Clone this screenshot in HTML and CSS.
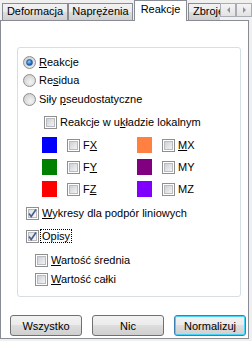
FILE: index.html
```html
<!DOCTYPE html>
<html lang="pl">
<head>
  <meta charset="UTF-8" />
  <title>Reakcje</title>
  <link rel="stylesheet" href="styles.css">
</head>
<body>
  <div class="tabs">
    <div class="tab t1">Deformacja</div>
    <div class="tab t2">Naprężenia</div>
    <div class="tab active">Reakcje</div>
    <div class="tab clip">Zbroje</div>
    <div class="spin">
      <span class="sbtn"><i class="tri left"></i></span>
      <span class="sbtn"><i class="tri right"></i></span>
    </div>
  </div>

  <div class="page">
    <div class="group">
      <div class="row r-first"><span class="radio on"></span><span><u>R</u>eakcje</span></div>
      <div class="row r-radio"><span class="radio"></span><span>Re<u>s</u>idua</span></div>
      <div class="row r-radio2"><span class="radio"></span><span>Siły <u>p</u>seudostatyczne</span></div>
      <div class="row r-local"><span class="check"></span><span>Reakcje w u<u>k</u>ładzie lokalnym</span></div>

      <div class="colors">
        <div class="crow c1">
          <div class="cell"><span class="swatch" style="background:#0000ff"></span><span class="check"></span><span>F<u>X</u></span></div>
          <div class="cell"><span class="swatch" style="background:#ff8040"></span><span class="check"></span><span><u>M</u>X</span></div>
        </div>
        <div class="crow">
          <div class="cell"><span class="swatch" style="background:#008000"></span><span class="check"></span><span>F<u>Y</u></span></div>
          <div class="cell"><span class="swatch" style="background:#800080"></span><span class="check"></span><span>MY</span></div>
        </div>
        <div class="crow">
          <div class="cell"><span class="swatch" style="background:#ff0000"></span><span class="check"></span><span>F<u>Z</u></span></div>
          <div class="cell"><span class="swatch" style="background:#8000ff"></span><span class="check"></span><span>MZ</span></div>
        </div>
      </div>

      <div class="row r-wyk"><span class="check on"><svg viewBox="0 0 13 13" width="13" height="13"><path d="M3 6.5 L5.2 9.5 L10 2.5" fill="none" stroke="#4d5e8e" stroke-width="1.6"/></svg></span><span><u>W</u>ykresy dla podpór liniowych</span></div>
      <div class="row r-opis"><span class="check on"><svg viewBox="0 0 13 13" width="13" height="13"><path d="M3 6.5 L5.2 9.5 L10 2.5" fill="none" stroke="#4d5e8e" stroke-width="1.6"/></svg></span><span class="focus">Opisy</span></div>
      <div class="row r-sr"><span class="check"></span><span><u>W</u>artość średnia</span></div>
      <div class="row r-ca"><span class="check"></span><span><u>W</u>artość całki</span></div>
    </div>

    <div class="buttons">
      <button class="btn">Wszystko</button>
      <button class="btn">Nic</button>
      <button class="btn def">Normalizuj</button>
    </div>
  </div>
</body>
</html>
```

FILE: styles.css
```css
body {
  margin: 0;
  background: #f0f0f0;
  font-family: "Liberation Sans", Arial, sans-serif;
  font-size: 11px;
  color: #000;
  width: 252px;
  height: 341px;
  overflow: hidden;
}
u { text-decoration: underline; text-underline-offset: 1px; }

/* tab strip */
.tabs {
  display: flex;
  align-items: flex-end;
  height: 20px;
  padding-left: 2px;
}
.tab {
  box-sizing: border-box;
  height: 17px;
  border: 1px solid #898c95;
  border-bottom: none;
  background: linear-gradient(#f2f2f2, #ebebeb 50%, #dddddd 51%, #cfcfcf);
  text-align: center;
  line-height: 15px;
  white-space: nowrap;
}
.t1 { width: 66px; }
.t2 { width: 65px; margin-left: 0; }
.tab.active {
  width: 53px;
  height: 21px;
  margin-left: 1px;
  margin-bottom: -1px;
  position: relative;
  z-index: 2;
  background: #fff;
  line-height: 17px;
}
.tab.clip {
  width: 32px;
  margin-left: 1px;
  border-right: none;
  overflow: hidden;
  text-align: left;
  padding-left: 4px;
}
.spin {
  display: flex;
  align-self: flex-start;
  margin-top: 3px;
}
.sbtn {
  box-sizing: border-box;
  width: 16px;
  height: 14px;
  border: 1px solid #a8acb3;
  background: linear-gradient(#f4f4f4, #e2e2e2);
  display: flex;
  align-items: center;
  justify-content: center;
}
.tri { width: 0; height: 0; border-top: 3px solid transparent; border-bottom: 3px solid transparent; }
.tri.left { border-right: 3px solid #8a93a6; }
.tri.right { border-left: 3px solid #8a93a6; }

/* page */
.page {
  box-sizing: border-box;
  width: 249px;
  height: 319px;
  border: 1px solid #898c95;
  background: #fff;
  padding: 26px 0 0 16px;
}
.group {
  box-sizing: border-box;
  width: 224px;
  height: 250px;
  border: 1px solid #d5dfe5;
  border-radius: 3px;
  padding: 6px 0 0 5px;
  display: flex;
  flex-direction: column;
}
.row {
  display: flex;
  align-items: center;
  gap: 3px;
  height: 16px;
}
.r-radio { margin-top: 2px; }
.r-radio2 { margin-top: 3px; }
.r-local { margin-top: 7px; padding-left: 21px; }
.r-wyk { margin-top: 8px; padding-left: 3px; }
.r-opis { margin-top: 7px; padding-left: 3px; }
.r-sr { margin-top: 8px; padding-left: 12px; }
.r-ca { margin-top: 3px; padding-left: 12px; }

.radio {
  box-sizing: border-box;
  width: 13px;
  height: 13px;
  border-radius: 50%;
  border: 1px solid #8e8f8f;
  background: radial-gradient(circle at 60% 65%, #f4f4f4, #d4d4d4 70%, #c2c2c2);
  display: flex;
  align-items: center;
  justify-content: center;
}
.radio.on::after {
  content: "";
  width: 5px;
  height: 5px;
  border-radius: 50%;
  background: radial-gradient(circle at 40% 35%, #8ed0ff, #1d6fc4 60%, #0a3d86);
  border: 1px solid #2a5b9e;
}
.check {
  box-sizing: border-box;
  width: 13px;
  height: 13px;
  border: 1px solid #8e8f8f;
  background: #fff;
  position: relative;
  flex: none;
}
.check::before {
  content: "";
  position: absolute;
  left: 1px;
  top: 1px;
  width: 9px;
  height: 9px;
  box-sizing: border-box;
  border: 1px solid #b8bcc2;
  background: linear-gradient(135deg, #cdd1d6, #f3f3f3);
}
.check.on::before { background: linear-gradient(135deg, #dfe2e6, #f7f7f7); }
.check svg { position: absolute; left: -1px; top: -1px; }

.focus { outline: 1px dotted #000; padding: 0 1px; margin-left: -1px; }

/* colour grid */
.colors {
  display: flex;
  flex-direction: column;
  gap: 6px;
  margin-top: 7px;
  padding-left: 19px;
}
.crow { display: flex; height: 16px; }
.cell {
  display: flex;
  align-items: center;
  width: 95px;
}
.swatch { width: 15px; height: 16px; margin-right: 10px; }
.cell .check { margin-right: 3px; }

/* buttons */
.buttons {
  display: flex;
  gap: 10px;
  margin-top: 18px;
  padding-left: 9px;
  margin-left: -16px;
}
.btn {
  box-sizing: border-box;
  width: 72px;
  height: 21px;
  border: 1px solid #707070;
  border-radius: 3px;
  background: linear-gradient(#f2f2f2, #ebebeb 45%, #dddddd 50%, #cfcfcf);
  font-family: "Liberation Sans", Arial, sans-serif;
  font-size: 11px;
  color: #000;
  padding: 0;
}
.btn.def {
  border-color: #3c7fb1;
  box-shadow: inset 0 0 0 1px #48d4f9;
}
```
